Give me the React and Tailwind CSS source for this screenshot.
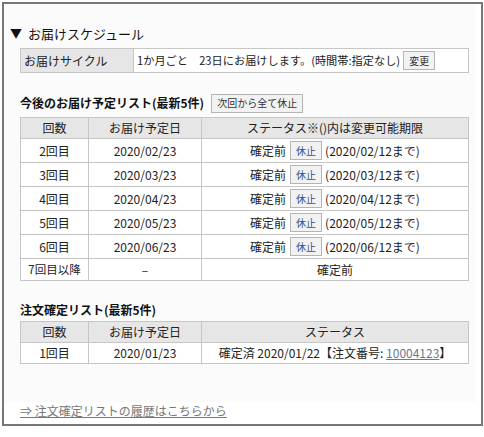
const font = "font-['Noto_Sans_CJK_JP','Noto_Sans',sans-serif]"

function SmallButton({ children, className = '' }) {
  return (
    <button
      type="button"
      className={`inline-flex h-[19px] shrink-0 items-center whitespace-nowrap border border-[#b4b4b4] bg-[#f2f2f2] px-[5px] text-[10px] leading-none ${className}`}
    >
      {children}
    </button>
  )
}

function SectionTitle({ children, action }) {
  return (
    <div className="flex h-[20px] items-center gap-[7px]">
      <h3 className="text-[12px] font-bold leading-none text-[#111]">{children}</h3>
      {action}
    </div>
  )
}

function HeadRow({ status }) {
  return (
    <tr className="h-[21px] bg-[#e6e6e6]">
      <th className="border border-[#c6c6c6] font-normal">回数</th>
      <th className="border border-[#c6c6c6] font-normal">お届け予定日</th>
      <th className="border border-[#c6c6c6] font-normal">{status}</th>
    </tr>
  )
}

function Cols() {
  return (
    <colgroup>
      <col className="w-[68px]" />
      <col className="w-[113px]" />
      <col />
    </colgroup>
  )
}

export default function App() {
  const plans = [
    { no: '2回目', date: '2020/02/23', limit: '2020/02/12' },
    { no: '3回目', date: '2020/03/23', limit: '2020/03/12' },
    { no: '4回目', date: '2020/04/23', limit: '2020/04/12' },
    { no: '5回目', date: '2020/05/23', limit: '2020/05/12' },
    { no: '6回目', date: '2020/06/23', limit: '2020/06/12' },
  ]

  return (
    <div className={`h-[437px] w-[484px] bg-white pl-[2px] pt-[2px] text-[12px] text-[#222] ${font}`}>
      <div className="h-[424px] w-[481px] border-2 border-[#777]">
        <div className="mr-[6px] bg-[#fbfbfb] pb-[6px] pl-[6px] pt-[20px]">
          <h2 className="flex h-[18px] items-center gap-[6px] text-[13px] leading-none text-[#111]">
            <span className="text-[12px]">▼</span>
            <span>お届けスケジュール</span>
          </h2>

          <div className="ml-[10px] mt-[6px] w-[449px]">
            <div className="flex h-[25px] w-full border border-[#c6c6c6] bg-white">
              <div className="flex w-[113px] shrink-0 items-center border-r border-[#c6c6c6] bg-[#e6e6e6] px-[3px]">
                お届けサイクル
              </div>
              <div className="flex min-w-0 flex-1 items-center gap-[3px] whitespace-nowrap px-[3px]">
                <span className="text-[11.2px]">1か月ごと　23日にお届けします。(時間帯:指定なし)</span>
                <SmallButton className="text-[#333]">変更</SmallButton>
              </div>
            </div>

            <div className="mt-[20px]">
              <SectionTitle action={<SmallButton className="text-[#333]">次回から全て休止</SmallButton>}>
                今後のお届け予定リスト(最新5件)
              </SectionTitle>
            </div>

            <table className="mt-[4px] w-full table-fixed border-collapse bg-white text-center">
              <Cols />
              <thead>
                <HeadRow status="ステータス※()内は変更可能期限" />
              </thead>
              <tbody>
                {plans.map((p) => (
                  <tr key={p.no} className="h-[24px]">
                    <td className="border border-[#c6c6c6]">{p.no}</td>
                    <td className="border border-[#c6c6c6]">{p.date}</td>
                    <td className="border border-[#c6c6c6]">
                      <div className="flex items-center justify-center gap-[3px] whitespace-nowrap">
                        <span>確定前</span>
                        <SmallButton className="ml-[1px] text-[#34508a]">休止</SmallButton>
                        <span>({p.limit}まで)</span>
                      </div>
                    </td>
                  </tr>
                ))}
                <tr className="h-[22px]">
                  <td className="border border-[#c6c6c6] text-[11.5px]">7回目以降</td>
                  <td className="border border-[#c6c6c6]">–</td>
                  <td className="border border-[#c6c6c6]">確定前</td>
                </tr>
              </tbody>
            </table>

            <div className="mt-[19px]">
              <SectionTitle>注文確定リスト(最新5件)</SectionTitle>
            </div>

            <table className="mt-[1px] w-full table-fixed border-collapse bg-white text-center">
              <Cols />
              <thead>
                <HeadRow status="ステータス" />
              </thead>
              <tbody>
                <tr className="h-[21px]">
                  <td className="border border-[#c6c6c6]">1回目</td>
                  <td className="border border-[#c6c6c6]">2020/01/23</td>
                  <td className="border border-[#c6c6c6]">
                    確定済 2020/01/22【注文番号:{' '}
                    <a href="#" className="text-[#6b7894] underline">10004123</a>】
                  </td>
                </tr>
              </tbody>
            </table>

            <div className="h-[32px]" />
          </div>
        </div>

        <a href="#" className="ml-[16px] inline-block text-[12px] leading-[16px] text-[#777] underline">
          ⇒ 注文確定リストの履歴はこちらから
        </a>
      </div>
    </div>
  )
}
